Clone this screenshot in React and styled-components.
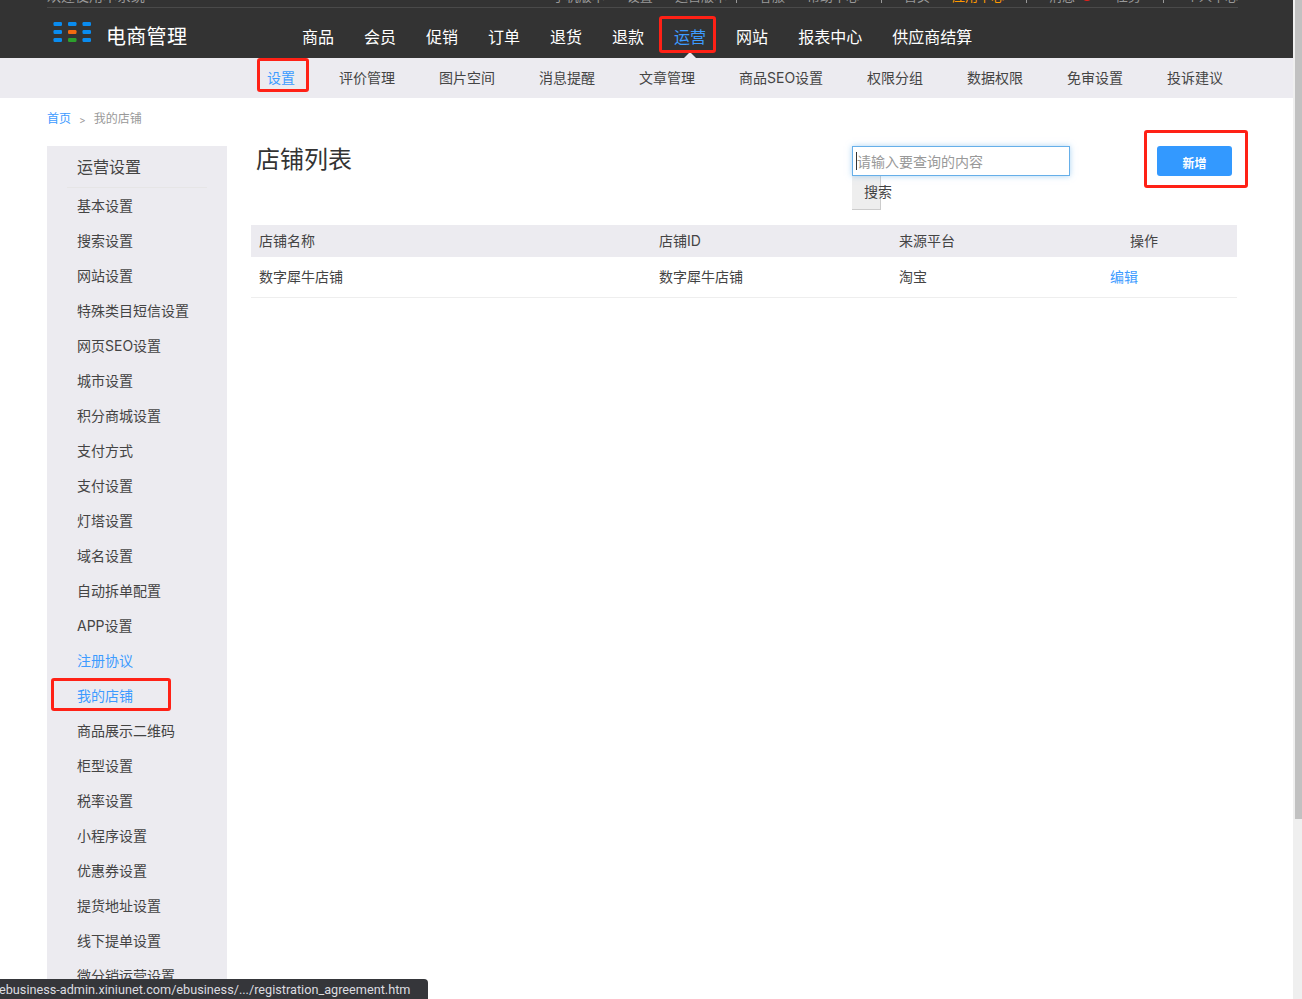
import React from "react";
import styled, { createGlobalStyle } from "styled-components";

const FONT = `"Inter", "Noto Sans CJK SC", sans-serif`;

const GlobalStyle = createGlobalStyle`
  html, body {
    margin: 0;
    padding: 0;
    height: 999px;
    overflow: hidden;
    background: #fff;
    font-family: ${FONT};
  }
  * { box-sizing: border-box; }
`;

const Page = styled.div`
  width: 1293px;
  height: 999px;
  overflow: hidden;
  background: #fff;
`;

const TopBar = styled.div`
  height: 58px;
  background: #333;
  overflow: hidden;
`;

const Utility = styled.div`
  height: 8px;
  margin: 0 55px 0 47px;
  border-bottom: 1px solid #4a4a4a;
  display: flex;
  justify-content: space-between;
  align-items: flex-end;
  font-size: 13px;
  line-height: 16px;
  color: #999;
`;

const UtilityLinks = styled.div`
  display: flex;
  align-items: center;
  gap: 22px;
  padding-bottom: 3px;
  span { white-space: nowrap; }
`;

const Welcome = styled.span`
  padding-bottom: 3px;
  font-size: 14px;
`;

const Highlight = styled.span`
  color: #f90;
`;

const Sep = styled.span`
  width: 1px;
  height: 14px;
  background: #999;
  margin-left: ${(p) => (p.$near ? "-13px" : "0")};
`;

const Badge = styled.i`
  display: inline-block;
  width: 12px;
  height: 12px;
  margin-left: 6px;
  border-radius: 50%;
  background: #e9201b;
`;

const MainRow = styled.div`
  display: flex;
  height: 50px;
`;

const Logo = styled.div`
  display: flex;
  align-items: flex-start;
  width: 302px;
  padding: 14px 0 0 53px;
  gap: 15px;
`;

const LogoText = styled.span`
  font-size: 20px;
  line-height: 30px;
  color: #fff;
  letter-spacing: 0.3px;
`;

const MainNav = styled.nav`
  display: flex;
  gap: 30px;
`;

const MainItem = styled.a`
  position: relative;
  font-size: 16px;
  line-height: 24px;
  padding-top: 17px;
  color: ${(p) => (p.$active ? "#3d9bff" : "#fff")};
  white-space: nowrap;
  &::after {
    content: "";
    display: ${(p) => (p.$active ? "block" : "none")};
    position: absolute;
    left: 50%;
    bottom: 0;
    margin-left: -6px;
    border: 6px solid transparent;
    border-top: 0;
    border-bottom-color: #ecebf0;
  }
`;

const SubBar = styled.div`
  height: 40px;
  background: #ecebf0;
  display: flex;
  padding-left: 267px;
  gap: 44px;
`;

const SubItem = styled.a`
  font-size: 14px;
  line-height: 40px;
  color: ${(p) => (p.$active ? "#3d9bff" : "#444")};
  white-space: nowrap;
`;

const Crumbs = styled.div`
  height: 48px;
  padding: 13px 0 0 47px;
  font-size: 12px;
  line-height: 16px;
  color: #999;
  display: flex;
  gap: 8px;
  a { color: #3d9bff; }
`;

const CrumbArrow = styled.span`
  font-size: 10px;
  margin-top: 1px;
`;

const Body = styled.div`
  display: flex;
  padding-left: 47px;
`;

const Side = styled.aside`
  width: 180px;
  height: 900px;
  flex: none;
  background: #ecebf0;
  padding: 0 20px;
`;

const SideTitle = styled.div`
  height: 42px;
  padding-left: 10px;
  font-size: 16px;
  line-height: 42px;
  color: #444;
  border-bottom: 1px solid #e6e5e6;
  margin-bottom: 1px;
`;

const SideItem = styled.a`
  display: block;
  height: 35px;
  padding-left: 10px;
  font-size: 14px;
  line-height: 33px;
  color: ${(p) => (p.$active ? "#3d9bff" : "#444")};
  white-space: nowrap;
`;

const Main = styled.main`
  width: 986px;
  margin-left: 24px;
`;

const Head = styled.div`
  height: 79px;
  display: flex;
`;

const Title = styled.h1`
  margin: 0;
  padding-left: 5px;
  width: 601px;
  font-size: 24px;
  font-weight: 400;
  line-height: 28px;
  color: #333;
`;

const SearchForm = styled.div`
  width: 305px;
  display: flex;
  flex-direction: column;
  align-items: flex-start;
`;

const SearchInput = styled.div`
  position: relative;
  width: 218px;
  height: 30px;
  border: 1px solid #66afe9;
  box-shadow: 0 0 6px rgba(102, 175, 233, 0.55);
  padding-left: 4px;
  font-size: 14px;
  line-height: 29px;
  color: #999;
  &::before {
    content: "";
    position: absolute;
    left: 3px;
    top: 5px;
    width: 1px;
    height: 18px;
    background: #333;
  }
`;

const SearchButton = styled.div`
  width: 29px;
  height: 34px;
  background: #eee;
  border-right: 1px solid #ccc;
  border-bottom: 1px solid #ccc;
  padding-left: 12px;
  font-size: 14px;
  line-height: 31px;
  color: #444;
  white-space: nowrap;
`;

const AddButton = styled.div`
  width: 75px;
  height: 30px;
  background: #3399ff;
  border-radius: 3px;
  color: #fff;
  font-size: 12px;
  font-weight: 700;
  line-height: 35px;
  text-align: center;
`;

const Row = styled.div`
  display: grid;
  grid-template-columns: 400px 240px 231px 1fr;
  height: ${(p) => (p.$head ? "32px" : "41px")};
  background: ${(p) => (p.$head ? "#ecebf0" : "#fff")};
  border-bottom: ${(p) => (p.$head ? "0" : "1px solid #eee")};
  font-size: 14px;
  line-height: ${(p) => (p.$head ? "32px" : "40px")};
  color: #444;
  padding-left: 8px;
`;

const ActionCell = styled.span`
  margin-left: ${(p) => (p.$head ? "0" : "-20px")};
  color: ${(p) => (p.$head ? "#444" : "#3d9bff")};
`;

const Marker = styled.span`
  position: fixed;
  left: ${(p) => p.$x}px;
  top: ${(p) => p.$y}px;
  width: ${(p) => p.$w}px;
  height: ${(p) => p.$h}px;
  border: 3px solid #ff2116;
  border-radius: 3px;
  pointer-events: none;
`;

const Scrollbar = styled.div`
  position: fixed;
  top: 0;
  right: 0;
  width: 9px;
  height: 999px;
  padding-left: 2px;
  background: #efefef;
  &::before {
    content: "";
    display: block;
    height: 819px;
    background: #c1c1c1;
  }
`;

const StatusTip = styled.div`
  position: fixed;
  left: 0;
  bottom: 0;
  width: 428px;
  height: 20px;
  background: #35363a;
  border-top-right-radius: 4px;
  color: #dcdde0;
  font-family: "Roboto", "Liberation Sans", sans-serif;
  font-size: 12.7px;
  line-height: 21px;
  white-space: nowrap;
  overflow: hidden;
`;

const TipText = styled.span`
  margin-left: -1px;
`;

const LogoMark = () => {
  const blue = "#0a8cf0";
  const colors = [blue, blue, blue, blue, "#f26b11", blue, blue, "#2ca02c", blue];
  return (
    <svg width="38" height="20" viewBox="0 0 38 20">
      {colors.map((c, i) => (
        <rect
          key={i}
          x={0.5 + (i % 3) * 14.5}
          y={Math.floor(i / 3) * 8}
          width="8.5"
          height="4"
          rx="1.2"
          fill={c}
        />
      ))}
    </svg>
  );
};

const mainNav = ["商品", "会员", "促销", "订单", "退货", "退款", "运营", "网站", "报表中心", "供应商结算"];
const subNav = ["设置", "评价管理", "图片空间", "消息提醒", "文章管理", "商品SEO设置", "权限分组", "数据权限", "免审设置", "投诉建议"];
const sideNav = [
  "基本设置", "搜索设置", "网站设置", "特殊类目短信设置", "网页SEO设置", "城市设置",
  "积分商城设置", "支付方式", "支付设置", "灯塔设置", "域名设置", "自动拆单配置",
  "APP设置", "注册协议", "我的店铺", "商品展示二维码", "柜型设置", "税率设置",
  "小程序设置", "优惠券设置", "提货地址设置", "线下提单设置", "微分销运营设置",
];

export default function App() {
  return (
    <Page>
      <GlobalStyle />
      <TopBar>
        <Utility>
          <Welcome>欢迎使用本系统</Welcome>
          <UtilityLinks>
            <span>手机版本</span>
            <span>设置</span>
            <span>运营版本</span>
            <Sep $near />
            <span>客服</span>
            <span>帮助中心</span>
            <Sep />
            <span>首页</span>
            <Highlight>应用中心</Highlight>
            <Sep />
            <span>消息<Badge /></span>
            <span>任务</span>
            <Sep />
            <span>个人中心</span>
          </UtilityLinks>
        </Utility>
        <MainRow>
          <Logo>
            <LogoMark />
            <LogoText>电商管理</LogoText>
          </Logo>
          <MainNav>
            {mainNav.map((n) => (
              <MainItem key={n} $active={n === "运营"}>{n}</MainItem>
            ))}
          </MainNav>
        </MainRow>
      </TopBar>
      <SubBar>
        {subNav.map((n) => (
          <SubItem key={n} $active={n === "设置"}>{n}</SubItem>
        ))}
      </SubBar>
      <Crumbs>
        <a>首页</a>
        <CrumbArrow>&gt;</CrumbArrow>
        <span>我的店铺</span>
      </Crumbs>
      <Body>
        <Side>
          <SideTitle>运营设置</SideTitle>
          {sideNav.map((n) => (
            <SideItem key={n} $active={n === "注册协议" || n === "我的店铺"}>{n}</SideItem>
          ))}
        </Side>
        <Main>
          <Head>
            <Title>店铺列表</Title>
            <SearchForm>
              <SearchInput>请输入要查询的内容</SearchInput>
              <SearchButton>搜索</SearchButton>
            </SearchForm>
            <AddButton>新增</AddButton>
          </Head>
          <Row $head>
            <span>店铺名称</span>
            <span>店铺ID</span>
            <span>来源平台</span>
            <ActionCell $head>操作</ActionCell>
          </Row>
          <Row>
            <span>数字犀牛店铺</span>
            <span>数字犀牛店铺</span>
            <span>淘宝</span>
            <ActionCell>编辑</ActionCell>
          </Row>
        </Main>
      </Body>
      <Marker $x={659} $y={16} $w={57} $h={37} />
      <Marker $x={257} $y={58} $w={52} $h={34} />
      <Marker $x={1144} $y={130} $w={104} $h={58} />
      <Marker $x={51} $y={678} $w={120} $h={33} />
      <Scrollbar />
      <StatusTip>
        <TipText>ebusiness-admin.xiniunet.com/ebusiness/.../registration_agreement.htm</TipText>
      </StatusTip>
    </Page>
  );
}
